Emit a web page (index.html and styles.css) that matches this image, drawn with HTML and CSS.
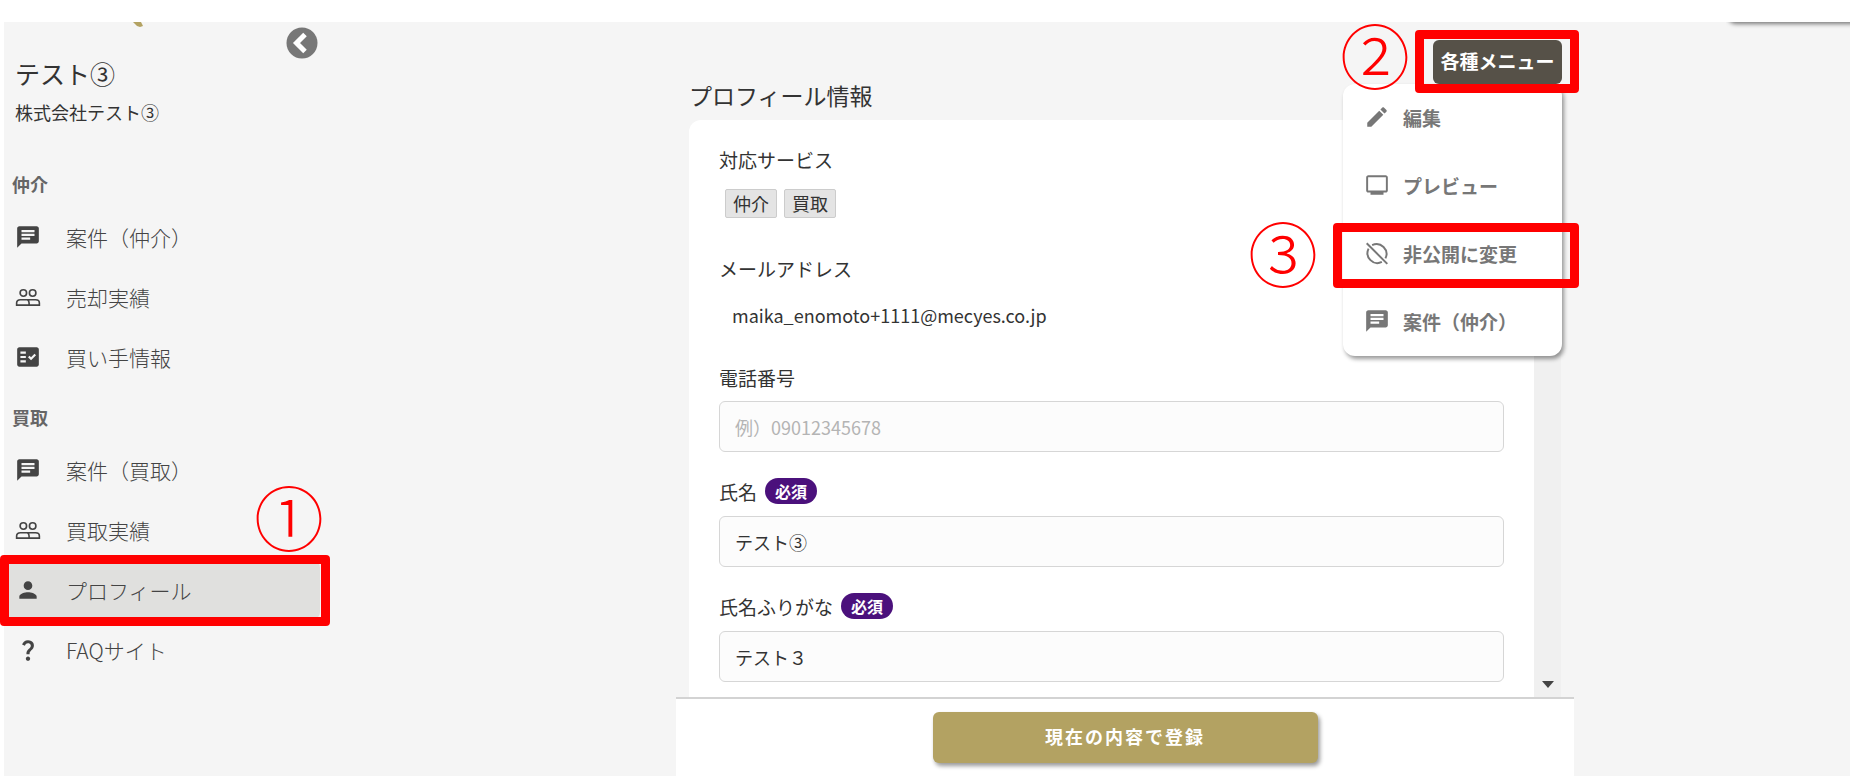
FILE: index.html
```html
<!DOCTYPE html>
<html lang="ja">
<head>
  <meta charset="UTF-8" />
  <meta name="viewport" content="width=device-width, initial-scale=1.0" />
  <title>プロフィール情報</title>
  <link rel="stylesheet" href="styles.css">
</head>
<body>

  <!-- Shared icons -->
  <svg class="sprite" aria-hidden="true">
    <symbol id="icon-chat" viewBox="0 0 24 24">
      <path fill-rule="evenodd" d="M20 2H4c-1.1 0-2 .9-2 2v18l4-4h14c1.1 0 2-.9 2-2V4c0-1.1-.9-2-2-2zM6 5.500h12v2H6zm0 3.500h12v2H6zm8 5.500H6v-2h8z"/>
    </symbol>
    <symbol id="icon-people" viewBox="0 0 24 24">
      <g fill="none" stroke="currentColor" stroke-width="1.500">
        <circle cx="7.700" cy="8.300" r="3"/>
        <circle cx="16.300" cy="8.300" r="3"/>
        <path d="M1.500 19.500v-2c0-1.700 1.200-3 3.500-3h14c2.300 0 3.500 1.300 3.500 3v2zM13 19.500v-2c0-1.500-.6-2.500-1.500-3"/>
      </g>
    </symbol>
    <symbol id="icon-check" viewBox="0 0 24 24">
      <path fill-rule="evenodd" d="M20 3H4c-1.100 0-2 .9-2 2v14c0 1.100.9 2 2 2h16c1.100 0 2-.9 2-2V5c0-1.100-.9-2-2-2zM10 17H5v-2h5zm0-4H5v-2h5zm0-4H5V7h5zm4.820 6L12 12.160l1.410-1.410 1.410 1.420L17.990 9l1.420 1.420z"/>
    </symbol>
    <symbol id="icon-person" viewBox="0 0 24 24">
      <path d="M12 12c2.210 0 4-1.790 4-4s-1.790-4-4-4-4 1.790-4 4 1.790 4 4 4zm0 2c-2.670 0-8 1.340-8 4v2h16v-2c0-2.660-5.330-4-8-4z"/>
    </symbol>
    <symbol id="icon-question" viewBox="0 0 24 24">
      <path d="M11.070 12.850c.77-1.390 2.250-2.210 3.110-3.440.91-1.290.4-3.700-2.180-3.700-1.690 0-2.520 1.280-2.870 2.340L6.540 6.960C7.250 4.830 9.180 3 11.990 3c2.350 0 3.960 1.070 4.780 2.410.7 1.150 1.110 3.300.03 4.900-1.200 1.770-2.350 2.310-2.970 3.450-.25.46-.35.76-.35 2.240h-2.890c-.01-.78-.13-2.050.48-3.150zM14 20c0 1.100-.9 2-2 2s-2-.9-2-2 .9-2 2-2 2 .9 2 2z"/>
    </symbol>
    <symbol id="icon-pencil" viewBox="0 0 24 24">
      <path d="M3 17.250V21h3.750L17.810 9.940l-3.750-3.750zM20.710 7.040c.39-.39.39-1.020 0-1.410l-2.340-2.340c-.39-.39-1.020-.39-1.410 0l-1.830 1.830 3.750 3.750z"/>
    </symbol>
    <symbol id="icon-monitor" viewBox="0 0 24 24">
      <path fill-rule="evenodd" d="M20 3H4c-1.100 0-2 .9-2 2v12c0 1.100.9 2 2 2h2v2h12v-2h2c1.100 0 2-.9 2-2V5c0-1.100-.9-2-2-2zm.2 14H3.800V4.800h16.400z"/>
    </symbol>
    <symbol id="icon-off" viewBox="0 0 24 24">
      <g fill="none" stroke="currentColor" stroke-width="1.800">
        <path d="M7.500 4.700A9.200 9.200 0 0 1 19.800 17M16.500 20.300A9.200 9.200 0 0 1 4.200 8"/>
        <path d="M2.500 3l19 19"/>
      </g>
    </symbol>
  </svg>

  <div class="app">
    <aside class="sidebar">
      <svg class="logo" viewBox="0 0 10 5" aria-hidden="true"><path d="M0 0h8l2 4-3 1-3-1z"/></svg>
      <button type="button" class="collapse" aria-label="閉じる">
        <svg viewBox="0 0 32 32"><circle cx="16" cy="16" r="15.500"/><path d="M19 7.500L10.500 16l8.500 8.500"/></svg>
      </button>

      <div class="account">
        <p class="account-name">テスト③</p>
        <p class="account-company">株式会社テスト③</p>
      </div>

      <nav>
        <h2 class="nav-heading">仲介</h2>
        <a class="nav-item" href="#"><svg class="icon"><use href="#icon-chat"/></svg>案件（仲介）</a>
        <a class="nav-item" href="#"><svg class="icon"><use href="#icon-people"/></svg>売却実績</a>
        <a class="nav-item" href="#"><svg class="icon"><use href="#icon-check"/></svg>買い手情報</a>
        <h2 class="nav-heading">買取</h2>
        <a class="nav-item" href="#"><svg class="icon"><use href="#icon-chat"/></svg>案件（買取）</a>
        <a class="nav-item" href="#"><svg class="icon"><use href="#icon-people"/></svg>買取実績</a>
        <div class="marked">
          <a class="nav-item active" href="#"><svg class="icon"><use href="#icon-person"/></svg>プロフィール</a>
          <span class="mark mark-profile"></span>
          <span class="step step-1">①</span>
        </div>
        <a class="nav-item" href="#"><svg class="icon"><use href="#icon-question"/></svg>FAQサイト</a>
      </nav>
    </aside>

    <main class="main">
      <div class="corner"></div>
      <form class="profile">
        <div class="panel">
          <h1>プロフィール情報</h1>
          <div class="scroll-area">
            <div class="card">
              <div class="field">
                <span class="label">対応サービス</span>
                <div class="chips">
                  <span class="chip">仲介</span>
                  <span class="chip">買取</span>
                </div>
              </div>
              <div class="field">
                <span class="label">メールアドレス</span>
                <p class="email">maika_enomoto+1111@mecyes.co.jp</p>
              </div>
              <div class="field">
                <label class="label" for="tel">電話番号</label>
                <input id="tel" type="tel" placeholder="例）09012345678" />
              </div>
              <div class="field">
                <label class="label" for="name">氏名<span class="required">必須</span></label>
                <input id="name" type="text" value="テスト③" />
              </div>
              <div class="field">
                <label class="label" for="kana">氏名ふりがな<span class="required">必須</span></label>
                <input id="kana" type="text" value="テスト３" />
              </div>
            </div>
            <div class="scrollbar"></div>
          </div>

          <div class="menu">
            <div class="marked">
              <button type="button" class="menu-button">各種メニュー</button>
              <span class="mark mark-menu"></span>
              <span class="step step-2">②</span>
            </div>
            <div class="menu-list">
              <a class="menu-item" href="#"><svg class="icon"><use href="#icon-pencil"/></svg>編集</a>
              <a class="menu-item" href="#"><svg class="icon"><use href="#icon-monitor"/></svg>プレビュー</a>
              <div class="marked">
                <a class="menu-item" href="#"><svg class="icon"><use href="#icon-off"/></svg>非公開に変更</a>
                <span class="mark mark-private"></span>
                <span class="step step-3">③</span>
              </div>
              <a class="menu-item" href="#"><svg class="icon"><use href="#icon-chat"/></svg>案件（仲介）</a>
            </div>
          </div>
        </div>

        <div class="actions">
          <button type="submit" class="submit">現在の内容で登録</button>
        </div>
      </form>
    </main>
  </div>

</body>
</html>
```
FILE: styles.css
```css
* {
  box-sizing: border-box;
}

body {
  margin: 0;
  padding: 22px 0 0 4px;
  font-family: 'Noto Sans CJK JP', sans-serif;
  font-size: 18px;
  color: #333;
  background-color: #fff;
}

h1,
h2,
p {
  margin: 0;
  font-weight: normal;
}

a {
  color: inherit;
  text-decoration: none;
}

button,
input {
  font-family: inherit;
}

.sprite {
  position: absolute;
  width: 0;
  height: 0;
}

.icon {
  flex: none;
  width: 26px;
  height: 26px;
  fill: currentColor;
}

.app {
  display: flex;
  height: calc(100vh - 22px);
  background-color: #f5f5f5;
}

/* Sidebar */
.sidebar {
  position: relative;
  flex: none;
  width: 396px;
}

.logo {
  position: absolute;
  top: 0;
  left: 129px;
  width: 10px;
  height: 5px;
  fill: #b3a262;
}

.collapse {
  position: absolute;
  top: 5px;
  left: 282px;
  width: 32px;
  height: 32px;
  padding: 0;
  border: none;
  background: none;
  cursor: pointer;
}

.collapse svg {
  display: block;
}

.collapse circle {
  fill: #777;
}

.collapse path {
  fill: none;
  stroke: #fff;
  stroke-width: 5px;
}

.account {
  padding: 32px 11px 0;
}

.account-name {
  font-size: 25px;
  line-height: 38px;
}

.account-company {
  line-height: 40px;
}

nav {
  width: 316px;
  padding-top: 22px;
}

.nav-heading {
  padding: 12px 8px 5px;
  font-size: 18px;
  font-weight: 700;
  line-height: 36px;
  color: #666;
}

.nav-item {
  display: flex;
  align-items: center;
  gap: 25px;
  height: 60px;
  padding-left: 11px;
  font-size: 21px;
  font-weight: 300;
  color: #444;
}

.nav-item.active {
  background-color: #e0e0de;
  border-radius: 8px;
}

/* Main column */
.main {
  position: relative;
  display: flex;
  flex: 1;
  justify-content: center;
}

/* Lower edge of the box that sits in the top right corner */
.corner {
  position: absolute;
  top: 0;
  right: 0;
  width: 124px;
  height: 8px;
  overflow: hidden;
}

.corner::before {
  content: '';
  display: block;
  width: 140px;
  height: 20px;
  margin-top: -20px;
  border-radius: 8px;
  box-shadow: 2px 2px 4px rgba(0, 0, 0, 0.5);
}

.profile {
  display: flex;
  flex-direction: column;
  width: 100%;
  max-width: 898px;
}

.panel {
  position: relative;
  display: flex;
  flex: 1;
  flex-direction: column;
  min-height: 0;
  padding: 52px 13px 0;
}

h1 {
  padding-bottom: 4px;
  font-size: 23px;
  line-height: 42px;
}

.scroll-area {
  display: flex;
  flex: 1;
  min-height: 0;
  overflow: hidden;
}

.card {
  flex: 1;
  padding: 23px 30px;
  background-color: #fff;
  border-radius: 12px 0 0 0;
}

.scrollbar {
  display: flex;
  align-items: flex-end;
  justify-content: center;
  width: 27px;
  padding-bottom: 9px;
  background-color: #f0f0f0;
}

.scrollbar::after {
  content: '';
  border: 6px solid transparent;
  border-top: 7px solid #444;
  border-bottom: none;
}

.field {
  margin-bottom: 22px;
}

.label {
  display: flex;
  align-items: center;
  gap: 8px;
  min-height: 32px;
  margin-bottom: 8px;
  font-size: 19px;
}

.chips {
  display: flex;
  gap: 7px;
  height: 47px;
  padding: 6px 6px 12px;
}

.chip {
  padding: 0 7px;
  border: 1px solid #ccc;
  border-radius: 2px;
  background-color: #e4e4e4;
  font-size: 18px;
  line-height: 27px;
}

.email {
  height: 47px;
  padding-left: 13px;
  line-height: 46px;
}

.required {
  margin: 4px 0;
  padding: 0 10px;
  border-radius: 13px;
  background-color: #4b117c;
  color: #fff;
  font-size: 16px;
  font-weight: 700;
  line-height: 26px;
}

input {
  width: 100%;
  height: 51px;
  padding: 0 15px;
  border: 1px solid #d6d6d6;
  border-radius: 6px;
  background-color: #fcfcfc;
  color: #333;
  font-size: 18px;
}

input::placeholder {
  color: #b4b4b4;
}

.actions {
  display: flex;
  justify-content: center;
  padding: 13px 0;
  border-top: 2px solid #d3d3d3;
  background-color: #fff;
}

.submit {
  width: 385px;
  height: 51px;
  padding: 0 0 3px;
  border: none;
  border-radius: 6px;
  background-color: #b3a262;
  box-shadow: 2px 3px 4px rgba(0, 0, 0, 0.4);
  color: #fff;
  font-size: 18px;
  font-weight: 700;
  letter-spacing: 2px;
  cursor: pointer;
}

/* Drop-down menu */
.menu {
  position: absolute;
  top: 18px;
  right: 12px;
  display: flex;
  flex-direction: column;
  align-items: flex-end;
}

.menu-button {
  display: block;
  width: 129px;
  height: 44px;
  padding: 0 0 3px;
  border: none;
  border-radius: 6px;
  background-color: #565148;
  color: #fff;
  font-size: 19px;
  font-weight: 700;
  cursor: pointer;
}

.menu-list {
  width: 219px;
  border-radius: 12px;
  background-color: #fff;
  box-shadow: 2px 3px 4px rgba(0, 0, 0, 0.4);
}

.menu-item {
  display: flex;
  align-items: center;
  gap: 13px;
  height: 68px;
  padding: 0 0 2px 21px;
  color: #777;
  font-size: 19px;
  font-weight: 700;
}

/* Numbered steps */
.marked {
  position: relative;
}

.mark {
  position: absolute;
  border: 9px solid #f00;
  border-radius: 4px;
  pointer-events: none;
}

.mark-profile {
  inset: -5px -10px -6px -4px;
}

.mark-menu {
  inset: -10px -17px -9px -18px;
}

.mark-private {
  inset: 3px -17px 0 -10px;
}

.step {
  position: absolute;
  color: #f00;
  font-size: 70px;
  font-weight: 300;
  line-height: 64px;
  pointer-events: none;
}

.step-1 {
  top: -76px;
  right: -4px;
}

.step-2 {
  top: -18px;
  right: 152px;
}

.step-3 {
  top: 0;
  right: 244px;
}
```
